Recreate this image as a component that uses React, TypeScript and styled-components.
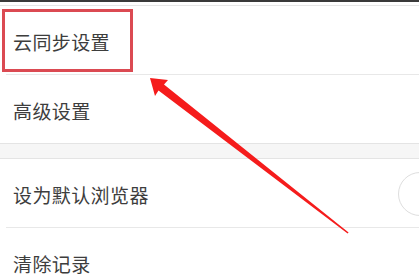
import styled, { createGlobalStyle } from "styled-components";

const GlobalStyle = createGlobalStyle`
  html, body {
    margin: 0;
    padding: 0;
    background: #ffffff;
    overflow: hidden;
  }
  body {
    font-family: "Noto Sans CJK SC", "Noto Sans", sans-serif;
  }
`;

const Page = styled.div`
  position: relative;
  width: 419px;
  height: 278px;
  overflow: hidden;
  background: #ffffff;
`;

const StatusEdge = styled.div`
  height: 2px;
  background: #3a3a3a;
`;

const TopGap = styled.div`
  height: 3px;
  background: #ffffff;
`;

const Group = styled.div<{ $topLine?: boolean }>`
  border-top: ${(p) => (p.$topLine ? "1px solid #e6e6e6" : "none")};
  background: #ffffff;
`;

const SectionGap = styled.div`
  height: 14px;
  background: #f6f6f6;
  border-top: 1px solid #e4e4e4;
  border-bottom: 1px solid #e4e4e4;
`;

const Row = styled.div<{ $height: number; $divider?: boolean }>`
  position: relative;
  display: flex;
  align-items: center;
  justify-content: space-between;
  height: ${(p) => p.$height}px;
  padding-left: 13px;
  overflow: hidden;
  &::after {
    content: "";
    display: ${(p) => (p.$divider ? "block" : "none")};
    position: absolute;
    left: 6px;
    right: 0;
    bottom: 0;
    height: 1px;
    background: #e8e8e8;
  }
`;

const Label = styled.span`
  font-size: 19px;
  line-height: 1;
  color: #3d3d3d;
  letter-spacing: 0.4px;
  padding-top: 2px;
`;

// switch knob, half off the right edge
const Knob = styled.div`
  flex: none;
  width: 42px;
  height: 42px;
  margin-right: -23px;
  border-radius: 50%;
  border: 1.5px solid #dedede;
  background: #ffffff;
`;

const Highlight = styled.div`
  position: absolute;
  left: 2px;
  top: 9px;
  width: 131px;
  height: 63px;
  box-sizing: border-box;
  border: 3px solid #db4a52;
  pointer-events: none;
`;

const ArrowLayer = styled.svg`
  position: absolute;
  left: 0;
  top: 0;
  pointer-events: none;
`;

export default function App() {
  return (
    <Page>
      <GlobalStyle />
      <StatusEdge />
      <TopGap />
      <Group $topLine>
        <Row $height={69} $divider>
          <Label>云同步设置</Label>
        </Row>
        <Row $height={68}>
          <Label>高级设置</Label>
        </Row>
      </Group>
      <SectionGap />
      <Group>
        <Row $height={69} $divider>
          <Label>设为默认浏览器</Label>
          <Knob />
        </Row>
        <Row $height={69}>
          <Label>清除记录</Label>
        </Row>
      </Group>
      <Highlight />
      <ArrowLayer width="419" height="278" viewBox="0 0 419 278">
        <polygon
          points="150,78 168,80 164,84.5 348.6,232.6 347.6,233.6 158.5,90.5 155,96"
          fill="#f51c1c"
        />
      </ArrowLayer>
    </Page>
  );
}
